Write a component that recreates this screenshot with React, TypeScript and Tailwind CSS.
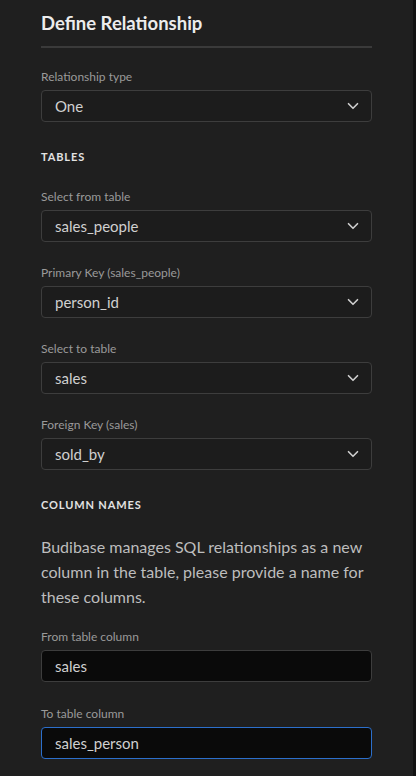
import { ChevronDown } from "lucide-react";

const font = { fontFamily: '"Lato", "Noto Sans", sans-serif' };

const Label = ({ children }: { children: React.ReactNode }) => (
  <div className="text-[12px] leading-[16px] text-[#9a9a9a]">{children}</div>
);

const Select = ({ value }: { value: string }) => (
  <div className="mt-[5px] flex h-[32px] items-center justify-between rounded-[4px] border border-[#3d3d3d] bg-[#1c1c1c] pl-[13px] pr-[9px]">
    <span className="text-[15px] text-[#d0d0d0]">{value}</span>
    <ChevronDown className="h-[18px] w-[18px] text-[#cfcfcf]" strokeWidth={2.2} />
  </div>
);

const Input = ({ value, focused }: { value: string; focused?: boolean }) => (
  <div
    className={
      focused
        ? "mt-[5px] flex h-[32px] items-center rounded-[4px] border border-[#2c6fcb] bg-[#0a0a0a] pl-[13px]"
        : "mt-[5px] flex h-[32px] items-center rounded-[4px] border border-[#3d3d3d] bg-[#0a0a0a] pl-[13px]"
    }
  >
    <span className="text-[15px] text-[#d0d0d0]">{value}</span>
  </div>
);

const Heading = ({ children }: { children: React.ReactNode }) => (
  <div className="text-[11px] font-bold uppercase leading-[16px] tracking-[0.08em] text-[#e2e2e2]">
    {children}
  </div>
);

export default function App() {
  return (
    <div className="flex h-[776px] w-[416px] overflow-hidden bg-[#1f1f1f]" style={font}>
      <div className="w-[413px] px-[41px] pt-[11px]">
        <h1 className="text-[18.5px] font-bold leading-[24px] text-[#ececec]">Define Relationship</h1>
        <div className="mt-[11px] h-[2px] bg-[#3a3a3a]" />

        <div className="mt-[21px]">
          <Label>Relationship type</Label>
          <Select value="One" />
        </div>

        <div className="mt-[27px]">
          <Heading>Tables</Heading>
        </div>

        <div className="mt-[24px] flex flex-col gap-[23px]">
          <div>
            <Label>Select from table</Label>
            <Select value="sales_people" />
          </div>
          <div>
            <Label>Primary Key (sales_people)</Label>
            <Select value="person_id" />
          </div>
          <div>
            <Label>Select to table</Label>
            <Select value="sales" />
          </div>
          <div>
            <Label>Foreign Key (sales)</Label>
            <Select value="sold_by" />
          </div>
        </div>

        <div className="mt-[27px]">
          <Heading>Column Names</Heading>
        </div>

        <p className="mt-[21px] text-[16px] leading-[25px] text-[#bdbdbd]">
          Budibase manages SQL relationships as a new column in the table, please provide a name for
          these columns.
        </p>

        <div className="mt-[20px]">
          <Label>From table column</Label>
          <Input value="sales" />
        </div>
        <div className="mt-[24px]">
          <Label>To table column</Label>
          <Input value="sales_person" focused />
        </div>
      </div>
      <div className="flex-1 bg-[#121212]" />
    </div>
  );
}
